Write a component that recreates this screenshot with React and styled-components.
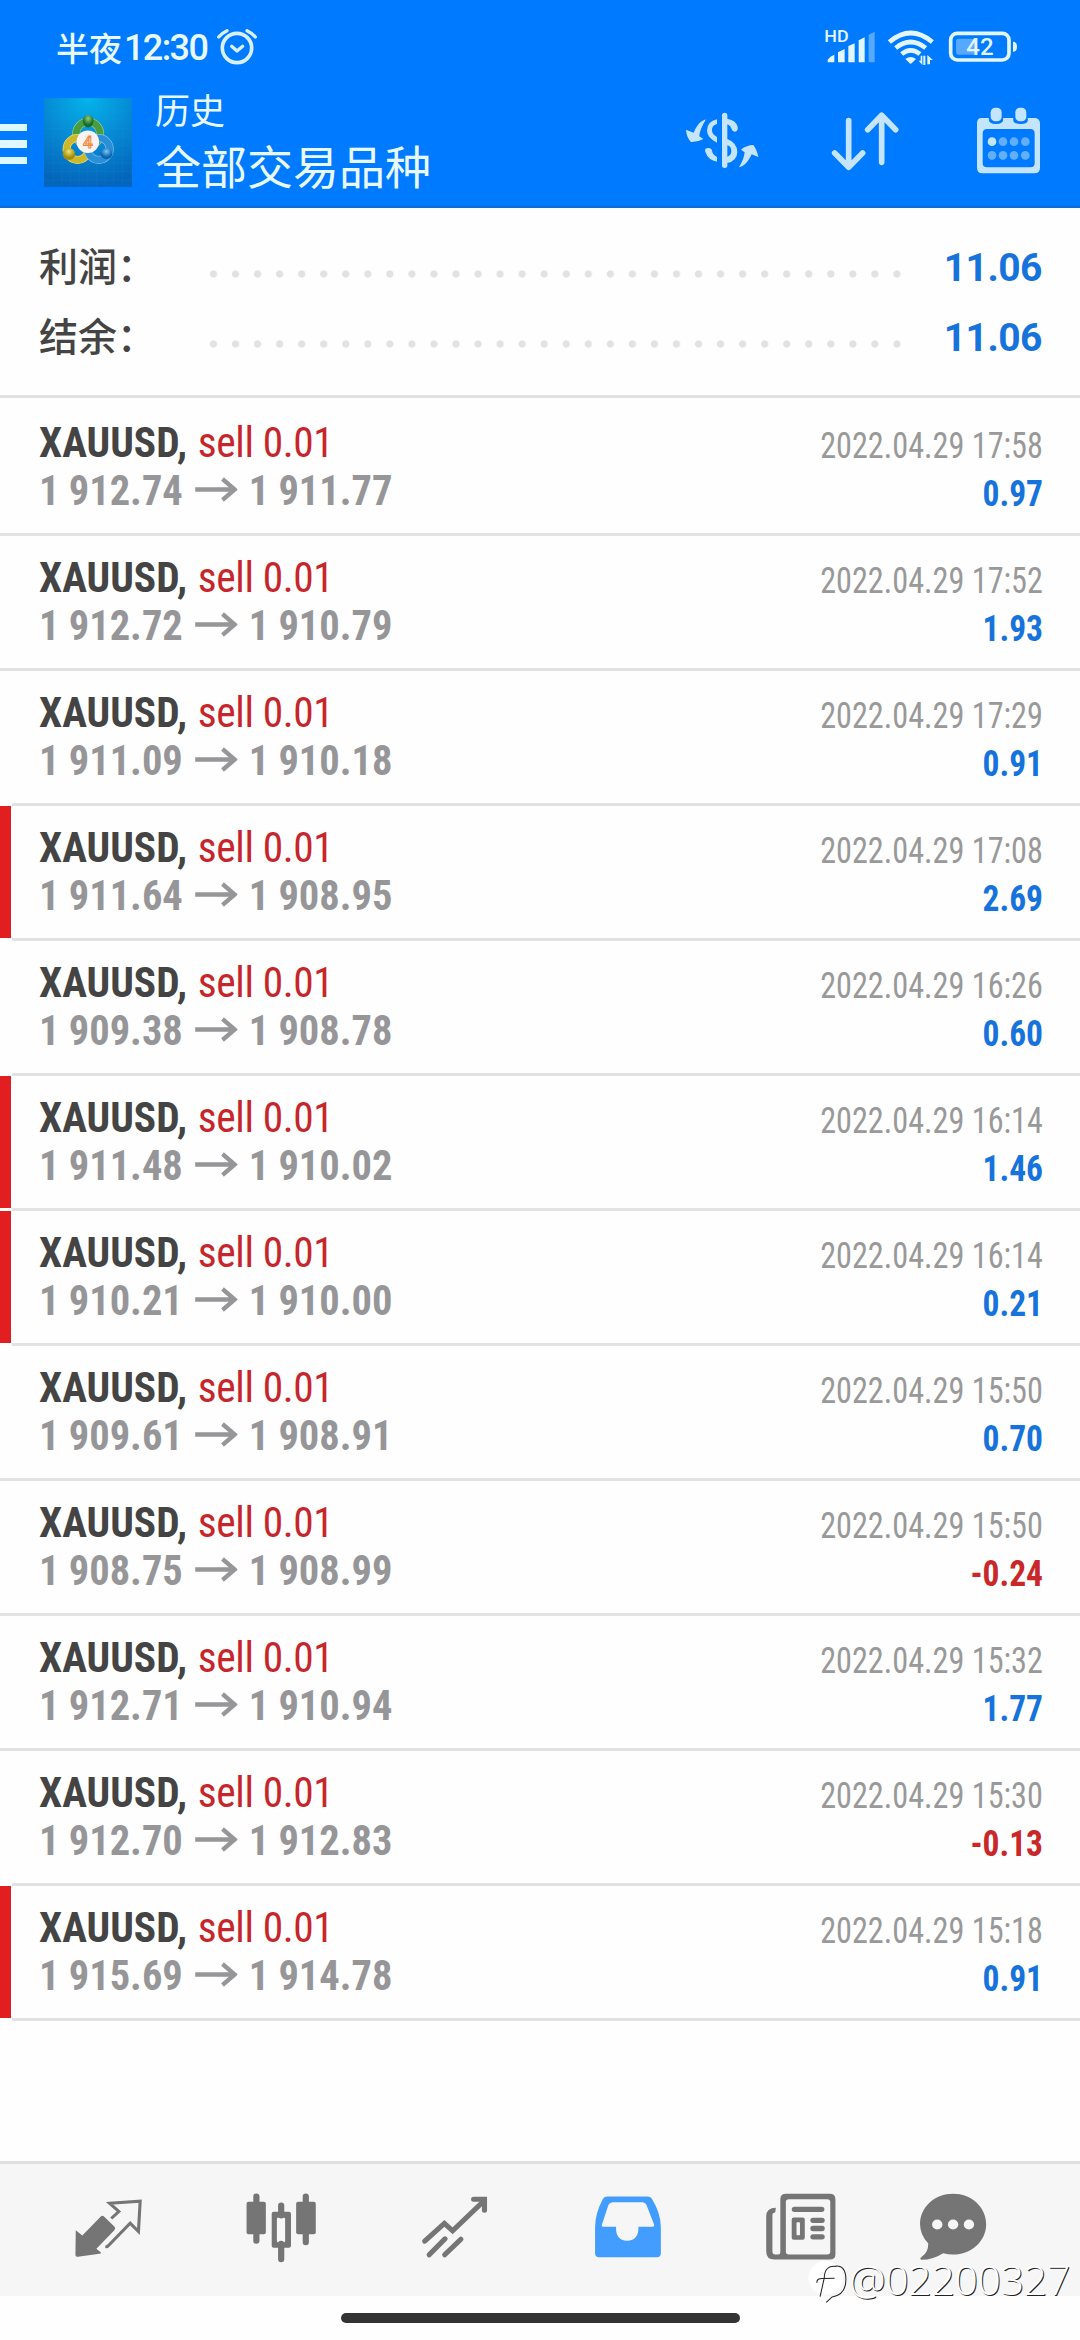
import React from 'react';
import styled, { createGlobalStyle } from 'styled-components';

const GlobalStyle = createGlobalStyle`
	body {
		margin: 0;
		background-color: #fefefe;
		font-family: Roboto, "Noto Sans CJK SC", sans-serif;
	}
`;

const Screen = styled.div`
	display: flex;
	flex-direction: column;
	width: 1080px;
	height: 2340px;
	overflow: hidden;
	background-color: #fefefe;
`;

const Header = styled.header`
	box-sizing: border-box;
	height: 208px;
	background-color: #007aff;
	border-bottom: 2px solid #0d6cd8;
	color: #e9faff;
`;

const StatusBar = styled.div`
	display: flex;
	align-items: center;
	height: 94px;
	padding: 0 62px 0 56px;
`;

const Clock = styled.div`
	display: flex;
	align-items: center;
	gap: 2px;
	padding-top: 2px;
	font-size: 36px;
	font-weight: 500;
	line-height: 50px;
	letter-spacing: -1.6px;
`;

const ClockPrefix = styled.span`
	margin-top: -3px;
	font-family: "Noto Sans CJK SC", sans-serif;
	font-size: 33px;
	letter-spacing: 0;
`;

const AlarmIcon = styled.svg`
	display: block;
	width: 42px;
	height: 40px;
	margin-left: 9px;
`;

const StatusIcons = styled.svg`
	display: block;
	width: 194px;
	height: 40px;
	margin-left: auto;
`;

const Toolbar = styled.div`
	display: flex;
	align-items: center;
	height: 96px;
`;

const MenuButton = styled.div`
	display: flex;
	flex-direction: column;
	gap: 9px;
	width: 27px;
	margin-right: 17px;
	padding-top: 4px;
`;

const MenuLine = styled.div`
	height: 7.4px;
	background-color: #dff8ff;
`;

const Logo = styled.svg`
	display: block;
	width: 88px;
	height: 89px;
	margin-right: 23px;
`;

const Titles = styled.div`
	display: flex;
	flex-direction: column;
	font-family: "Noto Sans CJK SC", sans-serif;
	white-space: nowrap;
`;

const Title = styled.div`
	font-size: 35px;
	line-height: 44px;
`;

const Subtitle = styled.div`
	font-size: 46px;
	line-height: 66px;
`;

const Actions = styled.svg`
	display: block;
	width: 360px;
	height: 72px;
	margin-left: auto;
	margin-right: 37px;
`;

const Summary = styled.section`
	box-sizing: border-box;
	height: 190px;
	padding: 23px 38px 0 39px;
	border-bottom: 3px solid #e2e2e2;
`;

const SummaryRow = styled.div`
	display: flex;
	align-items: center;
	height: 70px;
`;

const SummaryLabel = styled.div`
	width: 170px;
	margin-top: -4px;
	font-family: "Noto Sans CJK SC", sans-serif;
	font-size: 39px;
	font-weight: 500;
	color: #444;
`;

const Dots = styled.div`
	width: 697px;
	height: 8px;
	margin-top: 16px;
	background: radial-gradient(circle at 4.5px 4px, #e2e2e2 3.3px, transparent 4px) 0 0 / 22.05px 8px repeat-x;
`;

const SummaryValue = styled.div`
	margin-left: auto;
	margin-top: 4px;
	font-size: 39px;
	font-weight: 700;
	letter-spacing: -0.5px;
	color: #1673dc;
`;

const List = styled.main`
	flex: 1;
	padding-top: 3px;
`;

const Deal = styled.div`
	display: flex;
	height: 132px;
`;

const Marker = styled.div`
	width: 11px;
	background-color: ${props => (props.$on ? '#e11f21' : 'transparent')};
`;

const DealBody = styled.div`
	flex: 1;
	display: flex;
	justify-content: space-between;
	padding: 17px 37px 0 28px;
`;

const Divider = styled.div`
	height: 3px;
	margin-left: ${props => (props.$indent ? '12px' : '0')};
	background-color: #e2e2e2;
`;

const Column = styled.div`
	display: flex;
	flex-direction: column;
	align-items: ${props => (props.$right ? 'flex-end' : 'flex-start')};
	font-family: "Roboto Condensed", Roboto, sans-serif;
	font-stretch: 75%;
	white-space: nowrap;
`;

const Symbol = styled.div`
	font-size: 43px;
	line-height: 48px;
	font-weight: 700;
	color: #444;
	transform: scaleX(0.963);
	transform-origin: left;
`;

const Side = styled.span`
	margin-left: 1px;
	font-weight: 400;
	letter-spacing: -0.4px;
	color: #c6262b;
`;

const Prices = styled.div`
	display: flex;
	align-items: center;
	font-size: 43px;
	line-height: 48px;
	font-weight: 700;
	color: #969699;
	transform: scaleX(0.941);
	transform-origin: left;
`;

const Arrow = styled.svg`
	display: block;
	width: 46px;
	height: 25px;
	margin: -1px 12px 0;
`;

const Time = styled.div`
	height: 44px;
	padding-top: 4px;
	font-size: 36px;
	line-height: 48px;
	color: #999;
	transform: scaleX(0.895);
	transform-origin: right;
`;

const Profit = styled.div`
	padding-top: 4px;
	font-size: 36px;
	line-height: 48px;
	font-weight: 700;
	color: ${props => (props.$loss ? '#c9272a' : '#1673dc')};
	transform: scaleX(0.93);
	transform-origin: right;
`;

const Nav = styled.nav`
	box-sizing: border-box;
	position: relative;
	display: flex;
	height: 135px;
	padding: 29px 0 0 58px;
	gap: 73.3px;
	background-color: #f6f6f6;
	border-top: 3px solid #e0e0e0;
`;

const NavIcon = styled.svg`
	display: block;
	flex: none;
	width: 100px;
	height: 69.7px;
	overflow: visible;
	color: ${props => (props.$active ? '#429dff' : '#757575')};
`;

const HomeArea = styled.div`
	display: flex;
	justify-content: center;
	height: 44px;
	padding-top: 17px;
	box-sizing: border-box;
`;

const HomeBar = styled.div`
	width: 399px;
	height: 10px;
	border-radius: 5px;
	background-color: #333;
`;

const Watermark = styled.div`
	position: absolute;
	right: 10px;
	top: 82px;
	display: flex;
	align-items: center;
	font-family: "Open Sans", sans-serif;
	font-size: 41px;
	line-height: 66px;
	font-weight: 300;
	letter-spacing: -0.3px;
	color: #fff;
	text-shadow: 1px 1px 0 #222;
`;

const WatermarkLogo = styled.svg`
	display: block;
	width: 42px;
	height: 45px;
	margin-top: 3px;
`;

const deals = [
	{ open: '1 912.74', close: '1 911.77', time: '2022.04.29 17:58', profit: '0.97' },
	{ open: '1 912.72', close: '1 910.79', time: '2022.04.29 17:52', profit: '1.93' },
	{ open: '1 911.09', close: '1 910.18', time: '2022.04.29 17:29', profit: '0.91' },
	{ open: '1 911.64', close: '1 908.95', time: '2022.04.29 17:08', profit: '2.69', marked: true },
	{ open: '1 909.38', close: '1 908.78', time: '2022.04.29 16:26', profit: '0.60' },
	{ open: '1 911.48', close: '1 910.02', time: '2022.04.29 16:14', profit: '1.46', marked: true },
	{ open: '1 910.21', close: '1 910.00', time: '2022.04.29 16:14', profit: '0.21', marked: true },
	{ open: '1 909.61', close: '1 908.91', time: '2022.04.29 15:50', profit: '0.70' },
	{ open: '1 908.75', close: '1 908.99', time: '2022.04.29 15:50', profit: '-0.24' },
	{ open: '1 912.71', close: '1 910.94', time: '2022.04.29 15:32', profit: '1.77' },
	{ open: '1 912.70', close: '1 912.83', time: '2022.04.29 15:30', profit: '-0.13' },
	{ open: '1 915.69', close: '1 914.78', time: '2022.04.29 15:18', profit: '0.91', marked: true },
];

const Alarm = () => (
	<AlarmIcon viewBox="650 80 126 120" fill="none" stroke="#d9f1ff" strokeLinecap="round" strokeLinejoin="round">
		<circle cx="713" cy="143" r="44" strokeWidth="11" />
		<path d="M697 138l16 14 17-14" strokeWidth="10" />
		<path d="M658 110q10-12 25-19M768 110q-10-12-25-19" strokeWidth="10" />
	</AlarmIcon>
);

const Status = () => (
	<StatusIcons viewBox="552 82 582 120" fill="#e3f6ff">
		<text x="553" y="128" fontSize="47" fontWeight="500" textLength="73" lengthAdjust="spacingAndGlyphs">HD</text>
		<path d="M563 180q7-11 20-15v23h-20zM594 158l20-10v40h-20zM625 139l19-8v57h-19zM656 122l18-9v75h-18z" />
		<path d="M686 105l18-9v92h-18z" opacity=".38" />
		<g fill="none" stroke="#e3f6ff" strokeWidth="14">
			<path d="M748 127q64-54 129 0" />
			<path d="M767 145q45-36 90 0" />
			<path d="M785 163q27-22 55 0" />
		</g>
		<path d="M796 178q16-12 32 0l-13 13q-3 2-6 0z" />
		<path d="M847 168v28l-11-13h6v-15zM850 168h6v28h-6zM862 194v-28l17 15h-9v13z" />
		<rect x="932" y="101" width="175" height="80" rx="20" fill="none" stroke="#e3f6ff" strokeWidth="11" />
		<rect x="948" y="117" width="62" height="48" rx="7" opacity=".38" />
		<path d="M1119 126q12 0 12 15t-12 15z" />
		<text x="979" y="166" fontSize="70" fontWeight="500" textLength="82" lengthAdjust="spacingAndGlyphs">42</text>
	</StatusIcons>
);

const AppLogo = () => (
	<Logo viewBox="132 293 265 267">
		<defs>
			<radialGradient id="sky" cx=".5" cy="0" r="1">
				<stop offset="0" stopColor="#04b4ea" />
				<stop offset=".5" stopColor="#0689d4" />
				<stop offset="1" stopColor="#0465ba" />
			</radialGradient>
			<radialGradient id="greenHead" cy=".3">
				<stop offset="0" stopColor="#8fcf80" />
				<stop offset="1" stopColor="#186b28" />
			</radialGradient>
			<radialGradient id="yellowHead" cy=".3">
				<stop offset="0" stopColor="#f0e66c" />
				<stop offset="1" stopColor="#a28c10" />
			</radialGradient>
			<radialGradient id="blueHead" cy=".3">
				<stop offset="0" stopColor="#7cc6f5" />
				<stop offset="1" stopColor="#0c64b0" />
			</radialGradient>
		</defs>
		<rect x="132" y="293" width="265" height="267" fill="url(#sky)" />
		<path d="M160 293v267M186 293v267M212 293v267M238 293v267M264 293v267M290 293v267M316 293v267M342 293v267M368 293v267M132 332h265M132 358h265M132 384h265M132 410h265M132 436h265M132 462h265M132 488h265M132 514h265M132 540h265" stroke="#3db7e3" strokeWidth="1.5" opacity=".15" />
		<g fill="none">
			<circle cx="265" cy="400" r="36" stroke="#9fcf86" strokeWidth="24" />
			<circle cx="265" cy="400" r="36" stroke="#4a9c40" strokeWidth="20" />
			<circle cx="233" cy="446" r="33" stroke="#e9df7c" strokeWidth="24" />
			<circle cx="233" cy="446" r="33" stroke="#cdb829" strokeWidth="20" />
			<circle cx="297" cy="446" r="33" stroke="#7fc3ee" strokeWidth="24" />
			<circle cx="297" cy="446" r="33" stroke="#2a8fd6" strokeWidth="20" />
		</g>
		<ellipse cx="265" cy="362" rx="16" ry="19" fill="url(#greenHead)" />
		<ellipse cx="207" cy="461" rx="19" ry="18" fill="url(#yellowHead)" />
		<ellipse cx="320" cy="460" rx="18" ry="17" fill="url(#blueHead)" />
		<circle cx="264" cy="424" r="34" fill="#f8f4f3" />
		<text x="264" y="443" textAnchor="middle" fontSize="52" fontWeight="500" fill="#fbd9bd" stroke="#f08a3e" strokeWidth="3">4</text>
	</Logo>
);

const ToolbarActions = () => (
	<Actions viewBox="129 318 1080 216" fill="#c5e5ff" stroke="#c5e5ff" strokeLinecap="round" strokeLinejoin="round">
		<g stroke="none">
			<path d="M198 358q-15 4-26 19-8 11-11 21l-23-9q2 24 15 37 20 1 37-9l-12-8q1-20 20-51z" />
			<path d="M297 502q16-4 27-20 8-11 11-19l20 8q-4-22-15-36-20 0-37 14l11 8q-2 20-17 45z" />
			<path d="M231 358v14q-17 5-15 21 1 10 15 18v17q-30-14-30-37 1-27 30-33zM205 444q10 1 11 8 2 12 15 19v14q-26-4-35-29-4-12 9-12z" />
			<path d="M246 346q0-8 8-8t8 8v10q26 5 31 24 2 12-7 15-9 1-11-8-3-10-13-14v44q29 11 30 39-1 27-30 33v9q0 6-8 6t-8-6zM262 436v34q12-4 12-17t-12-17z" fillRule="evenodd" />
		</g>
		<path d="M626 362v137M584 459l42 43 42-43M725 487V346M683 389l42-43 42 43" fill="none" strokeWidth="17" />
		<g stroke="none">
			<path d="M1025 354h22q-4 18 21 18t21-18h31q-4 18 22 18t21-18h20q17 0 17 17v132q0 17-17 17h-156q-16 0-16-17V370q0-16 14-16zM1041 387q-13 0-13 14v88q0 13 13 13h130q13 0 13-13v-88q0-14-13-14z" fillRule="evenodd" />
			<rect x="1052" y="323" width="33" height="41" rx="14" />
			<rect x="1126" y="323" width="33" height="41" rx="14" />
			<circle cx="1056" cy="425" r="13" />
			<g opacity=".5">
				<circle cx="1089" cy="425" r="13" />
				<circle cx="1122" cy="425" r="13" />
				<circle cx="1156" cy="425" r="13" />
				<circle cx="1056" cy="466" r="13" />
				<circle cx="1089" cy="466" r="13" />
				<circle cx="1122" cy="466" r="13" />
				<circle cx="1156" cy="466" r="13" />
			</g>
		</g>
	</Actions>
);

const NavBar = () => (
	<Nav>
		<NavIcon viewBox="168.4 159.5 290.4 209" preserveAspectRatio="none" fill="currentColor">
			<path d="M220 271l19 16 53-56q5-6 10-1l30 30q5 5 0 11l-52 56 13 11q1 4-4 4l-63 9q-7 0-7-8z" />
			<path d="M323 236l22-21-27-25 89-6-5 91-24-25-65 69q-2 2-7 1" fill="none" stroke="currentColor" strokeWidth="9" />
		</NavIcon>
		<NavIcon viewBox="670.8 159.5 290.4 209" preserveAspectRatio="none" fill="currentColor">
			<path d="M744.5 170v133M888 170v137M816.5 197v30M816.5 312v46" stroke="currentColor" strokeWidth="18" strokeLinecap="round" />
			<rect x="716" y="186" width="56" height="97" rx="6" />
			<rect x="860" y="186" width="57" height="97" rx="6" />
			<path d="M795 216h44q6 0 6 6v96q0 6-6 6h-44q-6 0-6-6v-96q0-6 6-6zM808 233q-4 0-4 5v65q0 5 4 5h16q4 0 4-5v-65q0-5-4-5z" fillRule="evenodd" />
		</NavIcon>
		<NavIcon viewBox="1174.7 159.5 290.4 209" preserveAspectRatio="none" fill="none" stroke="currentColor" strokeWidth="15" strokeLinecap="round">
			<path d="M1232 304l57-53 24 22 92-91" />
			<path d="M1245 345l46-48M1290 345l47-47" />
			<path d="M1374 178.5h31.5v33" />
		</NavIcon>
		<NavIcon viewBox="110.4 159.5 290.4 209" preserveAspectRatio="none" fill="currentColor" $active>
			<path d="M196 170h116q9 0 13 7 26 44 26 85v78q0 12-12 12H172q-12 0-12-12v-78q0-41 23-85 4-7 13-7zM211 187q-8 0-12 8l-19 59q-2 7 6 7h35q-2 41 32 42 34-1 33-42h39q8 0 6-8l-22-58q-3-8-11-8z" fillRule="evenodd" />
		</NavIcon>
		<NavIcon viewBox="612.8 159.5 290.4 209" preserveAspectRatio="none" fill="currentColor">
			<path d="M715 162h126q17 0 17 16v166q0 15-17 15H681q-24 0-24-24V230q0-26 28-26l-2 14q-8 0-8 8v109q0 9 8 9h9q6 0 6-7V178q0-16 17-16zM723 178q-9 0-9 8v149q0 9 9 9h111q9 0 9-9V186q0-8-9-8z" fillRule="evenodd" />
			<path d="M739 208.5h79M793 241.5h26M793 266h26M793 291h26" fill="none" stroke="currentColor" strokeWidth="16" strokeLinecap="round" />
			<path d="M737 233h26q6 0 6 6v55q0 6-6 6h-26q-6 0-6-6v-55q0-6 6-6zM747 247q-2 0-2 3v33q0 3 2 3h6q2 0 2-3v-33q0-3-2-3z" fillRule="evenodd" />
		</NavIcon>
		<NavIcon viewBox="1114.5 159.5 290.4 209" preserveAspectRatio="none" fill="currentColor">
			<path d="M1199 162c53 0 96 40 96 91s-43 91-96 91q-14 0-29-4-28 19-63 20-7-2 1-9 19-13 19-40-24-26-24-58c0-51 43-91 96-91z" />
			<g fill="#f6f6f6">
				<circle cx="1153" cy="254" r="15" />
				<circle cx="1199" cy="254" r="15" />
				<circle cx="1245" cy="254" r="15" />
			</g>
		</NavIcon>
		<Watermark>
			<WatermarkLogo viewBox="770 363 122 134" preserveAspectRatio="none" fill="none">
				<circle cx="824" cy="422" r="50" fill="#fff" />
				<path d="M853 387q30-2 30 40 0 46-40 52l-17 16M855 388q-34-5-35 35l-12 55M799 437q-2-15 20-13l31-1" stroke="#222" strokeWidth="3" />
			</WatermarkLogo>
			@02200327
		</Watermark>
	</Nav>
);

class App extends React.Component {
	render() {
		return (
			<Screen>
				<GlobalStyle />
				<Header>
					<StatusBar>
						<Clock>
							<ClockPrefix>半夜</ClockPrefix>
							12:30
						</Clock>
						<Alarm />
						<Status />
					</StatusBar>
					<Toolbar>
						<MenuButton>
							<MenuLine />
							<MenuLine />
							<MenuLine />
						</MenuButton>
						<AppLogo />
						<Titles>
							<Title>历史</Title>
							<Subtitle>全部交易品种</Subtitle>
						</Titles>
						<ToolbarActions />
					</Toolbar>
				</Header>
				<Summary>
					<SummaryRow>
						<SummaryLabel>利润：</SummaryLabel>
						<Dots />
						<SummaryValue>11.06</SummaryValue>
					</SummaryRow>
					<SummaryRow>
						<SummaryLabel>结余：</SummaryLabel>
						<Dots />
						<SummaryValue>11.06</SummaryValue>
					</SummaryRow>
				</Summary>
				<List>
					{deals.map((deal, index) => {
						const next = deals[index + 1];
						return (
							<React.Fragment key={index}>
								<Deal>
									<Marker $on={deal.marked} />
									<DealBody>
										<Column>
											<Symbol>
												XAUUSD, <Side>sell 0.01</Side>
											</Symbol>
											<Prices>
												{deal.open}
												<Arrow viewBox="0 0 46 25" fill="none" stroke="currentColor" strokeWidth="4.5">
													<path d="M1 12.5h42M30 2l13 10.5L30 23" />
												</Arrow>
												{deal.close}
											</Prices>
										</Column>
										<Column $right>
											<Time>{deal.time}</Time>
											<Profit $loss={deal.profit.startsWith('-')}>{deal.profit}</Profit>
										</Column>
									</DealBody>
								</Deal>
								<Divider $indent={deal.marked || (next && next.marked)} />
							</React.Fragment>
						);
					})}
				</List>
				<NavBar />
				<HomeArea>
					<HomeBar />
				</HomeArea>
			</Screen>
		);
	}
}

export default App;
